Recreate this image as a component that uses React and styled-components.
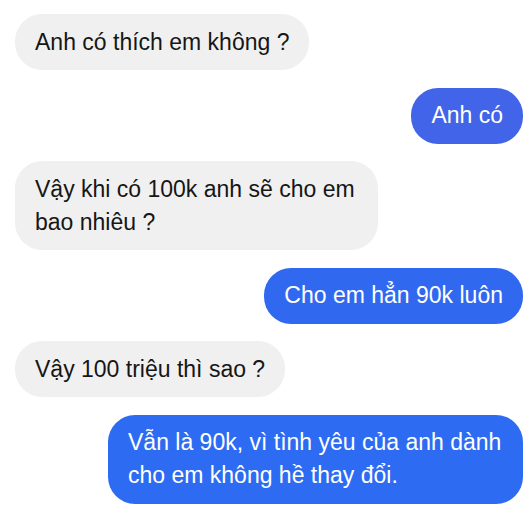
import React from 'react';
import styled, { createGlobalStyle } from 'styled-components';

const GlobalStyle = createGlobalStyle`
  html, body {
    margin: 0;
    padding: 0;
    background: #ffffff;
  }
  body {
    font-family: "Liberation Sans", Arial, sans-serif;
  }
`

const Thread = styled.div`
  width: 526px;
  height: 520px;
  box-sizing: border-box;
  padding: 14px 3px 0 15px;
  display: flex;
  flex-direction: column;
  gap: 17.5px;
  background: #ffffff;
  overflow: hidden;
`

const Bubble = styled.div`
  align-self: ${props => (props.$mine ? 'flex-end' : 'flex-start')};
  box-sizing: border-box;
  width: ${props => (props.$width ? `${props.$width}px` : 'auto')};
  padding: 11.5px 20px;
  border-radius: 27px;
  background: ${props => props.$bg || '#f0f0f0'};
  color: ${props => (props.$mine ? '#ffffff' : '#161616')};
  font-size: 23px;
  line-height: 33px;
`

const Line = styled.span`
  display: block;
  white-space: nowrap;
`

const messages = [
  { lines: ['Anh có thích em không ?'] },
  { lines: ['Anh có'], mine: true, bg: '#4164e8' },
  { lines: ['Vậy khi có 100k anh sẽ cho em', 'bao nhiêu ?'], width: 363 },
  { lines: ['Cho em hẳn 90k luôn'], mine: true, bg: '#3069ef' },
  { lines: ['Vậy 100 triệu thì sao ?'] },
  {
    lines: ['Vẫn là 90k, vì tình yêu của anh dành', 'cho em không hề thay đổi.'],
    mine: true,
    bg: '#2d6cf2',
    width: 415,
  },
];

export default function App() {
  return (
    <>
      <GlobalStyle />
      <Thread>
        {messages.map((m, i) => (
          <Bubble key={i} $mine={m.mine} $bg={m.bg} $width={m.width}>
            {m.lines.map((l, j) => (
              <Line key={j}>{l}</Line>
            ))}
          </Bubble>
        ))}
      </Thread>
    </>
  );
}
